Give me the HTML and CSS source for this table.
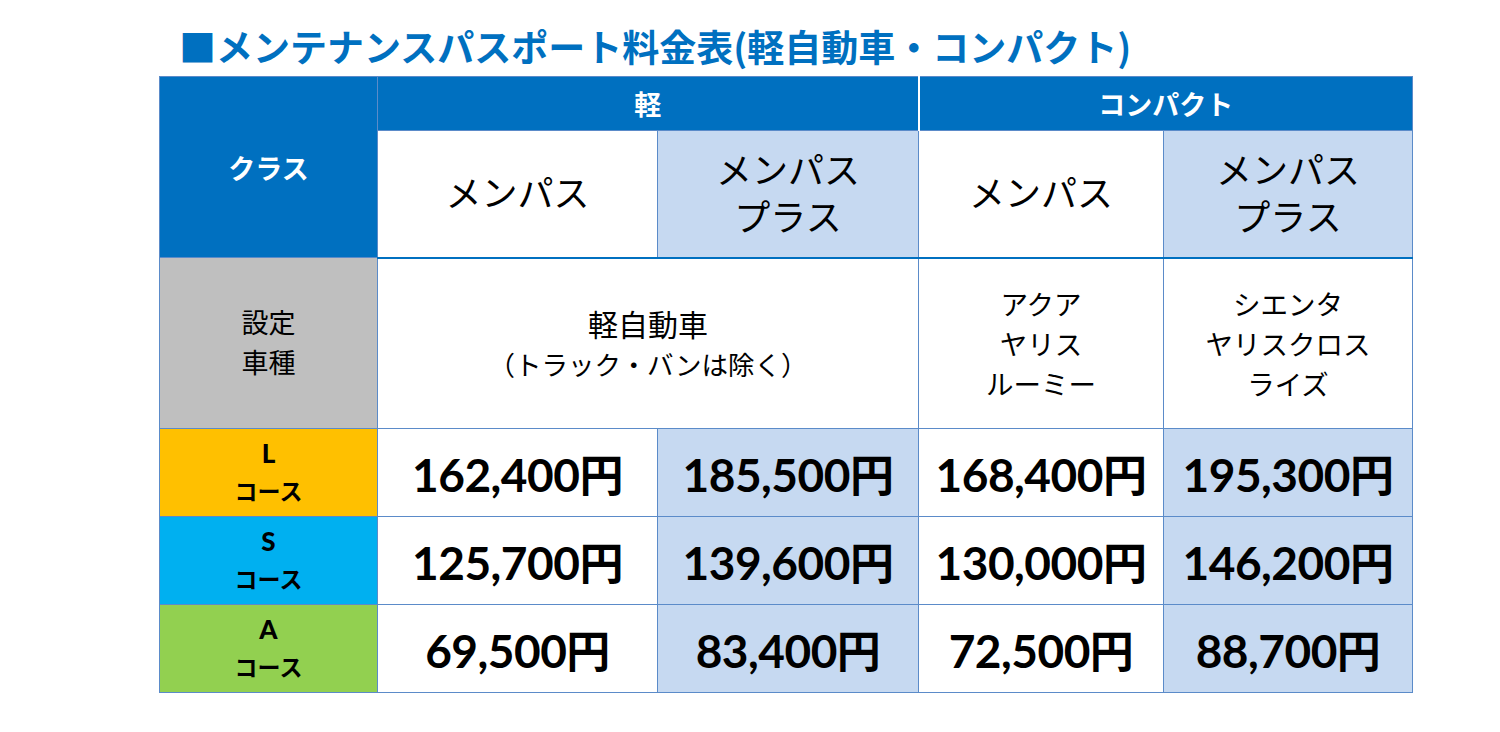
FILE: index.html
```html
<!DOCTYPE html>
<html lang="ja">
<head>
<meta charset="utf-8">
<title>メンテナンスパスポート料金表</title>
<link rel="stylesheet" href="styles.css">
</head>
<body>
<div class="page">
  <h1 class="title">■メンテナンスパスポート料金表(軽自動車・コンパクト)</h1>
  <table class="price">
    <colgroup>
      <col class="c-class"><col class="c-k1"><col class="c-k2"><col class="c-c1"><col class="c-c2">
    </colgroup>
    <tr class="r-head1">
      <th class="h-class" rowspan="2">クラス</th>
      <th class="h-group sep" colspan="2">軽</th>
      <th class="h-group sep" colspan="2">コンパクト</th>
    </tr>
    <tr class="r-head2">
      <td class="plan">メンパス</td>
      <td class="plan alt">メンパス<br>プラス</td>
      <td class="plan">メンパス</td>
      <td class="plan alt">メンパス<br>プラス</td>
    </tr>
    <tr class="r-cars">
      <td class="lbl-grey">設定<br>車種</td>
      <td class="cars cars-k" colspan="2"><span class="big">軽自動車</span><br>（トラック・バンは除く）</td>
      <td class="cars">アクア<br>ヤリス<br>ルーミー</td>
      <td class="cars">シエンタ<br>ヤリスクロス<br>ライズ</td>
    </tr>
    <tr class="r-price">
      <td class="course yellow"><b>L</b><br><span>コース</span></td>
      <td class="amt">162,400<span class="yen">円</span></td>
      <td class="amt alt">185,500<span class="yen">円</span></td>
      <td class="amt">168,400<span class="yen">円</span></td>
      <td class="amt alt">195,300<span class="yen">円</span></td>
    </tr>
    <tr class="r-price">
      <td class="course cyan"><b>S</b><br><span>コース</span></td>
      <td class="amt">125,700<span class="yen">円</span></td>
      <td class="amt alt">139,600<span class="yen">円</span></td>
      <td class="amt">130,000<span class="yen">円</span></td>
      <td class="amt alt">146,200<span class="yen">円</span></td>
    </tr>
    <tr class="r-price">
      <td class="course green"><b>A</b><br><span>コース</span></td>
      <td class="amt">69,500<span class="yen">円</span></td>
      <td class="amt alt">83,400<span class="yen">円</span></td>
      <td class="amt">72,500<span class="yen">円</span></td>
      <td class="amt alt">88,700<span class="yen">円</span></td>
    </tr>
  </table>
</div>
</body>
</html>
```

FILE: styles.css
```css
html, body {
  margin: 0;
  padding: 0;
  background: #ffffff;
}

body {
  font-family: "Noto Sans CJK JP", "Noto Sans", sans-serif;
  color: #000;
}

.page {
  padding: 0 0 0 159px;
}

.title {
  margin: 0;
  padding: 24px 0 0 20px;
  height: 76px;
  box-sizing: border-box;
  font-size: 37px;
  line-height: 44px;
  font-weight: 700;
  color: #0070c0;
  white-space: nowrap;
}

.price {
  border-collapse: collapse;
  table-layout: fixed;
  width: 1253px;
}

.c-class { width: 218px; }
.c-k1 { width: 280px; }
.c-k2 { width: 261px; }
.c-c1 { width: 245px; }
.c-c2 { width: 249px; }

.price th,
.price td {
  border: 1px solid #5b8bc9;
  padding: 0;
  text-align: center;
  vertical-align: middle;
}

.r-head1 { height: 54px; }
.r-head2 { height: 127px; }
.r-cars { height: 171px; }
.r-price { height: 88px; }

.h-class,
.h-group {
  background: #0070c0;
  color: #fff;
  font-weight: 700;
  font-size: 27px;
  border-color: #0070c0;
}

.h-class {
  border-top-color: #5b9bd5;
  border-bottom: 2px solid #0070c0;
  border-right: 2px solid #ffffff;
}

.h-group {
  border-top-color: #5b9bd5;
  border-bottom-color: #0070c0;
  padding-bottom: 2px;
}

.h-group.sep + .h-group.sep {
  border-left: 2px solid #ffffff;
}

.plan {
  font-size: 36px;
  line-height: 47px;
  font-weight: 400;
  background: #fff;
  border-bottom: 2px solid #0070c0 !important;
  padding-bottom: 4px !important;
}

.alt {
  background: #c6d9f1;
}

.plan.alt {
  background: #c6d9f1;
}

.lbl-grey {
  background: #bfbfbf;
  font-size: 27px;
  line-height: 40px;
  padding-bottom: 2px !important;
}

.cars {
  font-size: 27.5px;
  line-height: 40px;
  background: #fff;
}

.cars-k {
  font-size: 26.5px;
  line-height: 39px;
}

.cars-k .big {
  font-size: 30px;
}

.course {
  font-weight: 700;
  line-height: 34px;
}

.course b {
  font-family: "Lato", "Noto Sans", sans-serif;
  font-size: 26px;
}

.course span {
  font-size: 23px;
}

.yellow { background: #ffc000; }
.cyan { background: #00b0f0; }
.green { background: #92d050; }

.amt {
  font-family: "Lato", "Noto Sans CJK JP", sans-serif;
  font-weight: 700;
  font-size: 46px;
  letter-spacing: -0.5px;
  background: #fff;
}

.amt.alt {
  background: #c6d9f1;
}

.yen {
  font-family: "Noto Sans CJK JP", sans-serif;
  font-size: 44px;
}
```
